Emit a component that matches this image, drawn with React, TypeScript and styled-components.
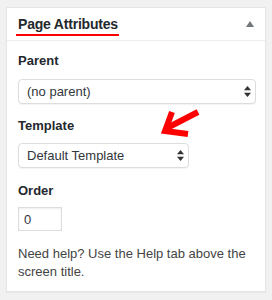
import React from "react";
import styled, { createGlobalStyle } from "styled-components";

const Global = createGlobalStyle`
  html, body { margin: 0; padding: 0; background: #f1f1f1; }
  body { font-family: "Liberation Sans", Arial, sans-serif; }
  * { box-sizing: border-box; }
`;

const Page = styled.div`
  padding: 7px 6px 9px 6px;
`;

const Panel = styled.section`
  position: relative;
  width: 260px;
  background: #fff;
  border: 1px solid #e5e5e5;
  box-shadow: 0 1px 1px rgba(0, 0, 0, 0.04);
`;

const Header = styled.header`
  height: 33px;
  display: flex;
  align-items: center;
  justify-content: space-between;
  padding: 0 11px 0 11px;
  border-bottom: 1px solid #eee;
`;

const Title = styled.h2`
  position: relative;
  margin: 0;
  font-size: 14px;
  line-height: 20px;
  font-weight: 700;
  color: #23282d;
  letter-spacing: -0.2px;
  &::after {
    content: "";
    position: absolute;
    left: -2px;
    right: -1px;
    top: 20px;
    height: 2px;
    background: #ff0000;
  }
`;

const Toggle = styled.button`
  border: 0;
  background: none;
  padding: 0;
  width: 8px;
  height: 6px;
  display: flex;
  cursor: pointer;
`;

const Body = styled.div`
  padding: 11px 11px 10px 11px;
`;

const Label = styled.label<{ $gap: number; $top?: number }>`
  display: block;
  font-size: 13px;
  line-height: 18px;
  font-weight: 700;
  color: #23282d;
  margin-top: ${(p) => p.$top ?? 0}px;
  margin-bottom: ${(p) => p.$gap}px;
`;

const SelectWrap = styled.div<{ $w: number }>`
  position: relative;
  width: ${(p) => p.$w}px;
`;

const Select = styled.select`
  appearance: none;
  -webkit-appearance: none;
  display: block;
  width: 100%;
  height: 25px;
  margin: 0;
  padding: 0 20px 0 8px;
  font-family: "Liberation Sans", Arial, sans-serif;
  font-size: 13px;
  color: #32373c;
  background: #fff;
  border: 1px solid #ddd;
  border-radius: 4px;
  box-shadow: 0 1px 1px rgba(0, 0, 0, 0.05);
  outline: none;
`;

const Stepper = styled.svg`
  position: absolute;
  right: 5px;
  top: 7px;
  width: 7px;
  height: 11px;
  pointer-events: none;
`;

const NumberInput = styled.input`
  display: block;
  width: 44px;
  height: 24px;
  margin: 0;
  padding: 0 5px;
  font-family: "Liberation Sans", Arial, sans-serif;
  font-size: 13px;
  color: #32373c;
  border: 1px solid #ddd;
  border-radius: 0;
  box-shadow: inset 0 1px 2px rgba(0, 0, 0, 0.07);
  outline: none;
`;

const Help = styled.p`
  margin: 14px 0 0 0;
  font-size: 13px;
  line-height: 18px;
  color: #444;
`;

const Annotation = styled.svg`
  position: absolute;
  left: 150px;
  top: 95px;
  width: 60px;
  height: 50px;
  pointer-events: none;
`;

function UpDown() {
  return (
    <Stepper viewBox="0 0 7 11">
      <path d="M3.5 0 L7 4.3 L0 4.3 Z" fill="#333" />
      <path d="M3.5 11 L7 6.7 L0 6.7 Z" fill="#333" />
    </Stepper>
  );
}

export default function App() {
  return (
    <>
      <Global />
      <Page>
        <Panel>
          <Header>
            <Title>Page Attributes</Title>
            <Toggle aria-label="Toggle panel">
              <svg width="8" height="6" viewBox="0 0 8 6">
                <path d="M4 0 L8 6 L0 6 Z" fill="#72777c" />
              </svg>
            </Toggle>
          </Header>
          <Body>
            <Label $gap={9}>Parent</Label>
            <SelectWrap $w={238}>
              <Select defaultValue="">
                <option value="">(no parent)</option>
              </Select>
              <UpDown />
            </SelectWrap>
            <Label $gap={8} $top={13}>Template</Label>
            <SelectWrap $w={171}>
              <Select defaultValue="default">
                <option value="default">Default Template</option>
              </Select>
              <UpDown />
            </SelectWrap>
            <Label $gap={7} $top={14}>Order</Label>
            <NumberInput type="text" defaultValue="0" />
            <Help>Need help? Use the Help tab above the screen title.</Help>
          </Body>
          <Annotation viewBox="0 0 60 50">
            <g stroke="#ff0000" strokeWidth="6" fill="none" strokeLinecap="butt" strokeLinejoin="miter">
              <line x1="41" y1="9" x2="10" y2="25" />
              <polyline points="15,9 8,28 31,31" />
            </g>
          </Annotation>
        </Panel>
      </Page>
    </>
  );
}
